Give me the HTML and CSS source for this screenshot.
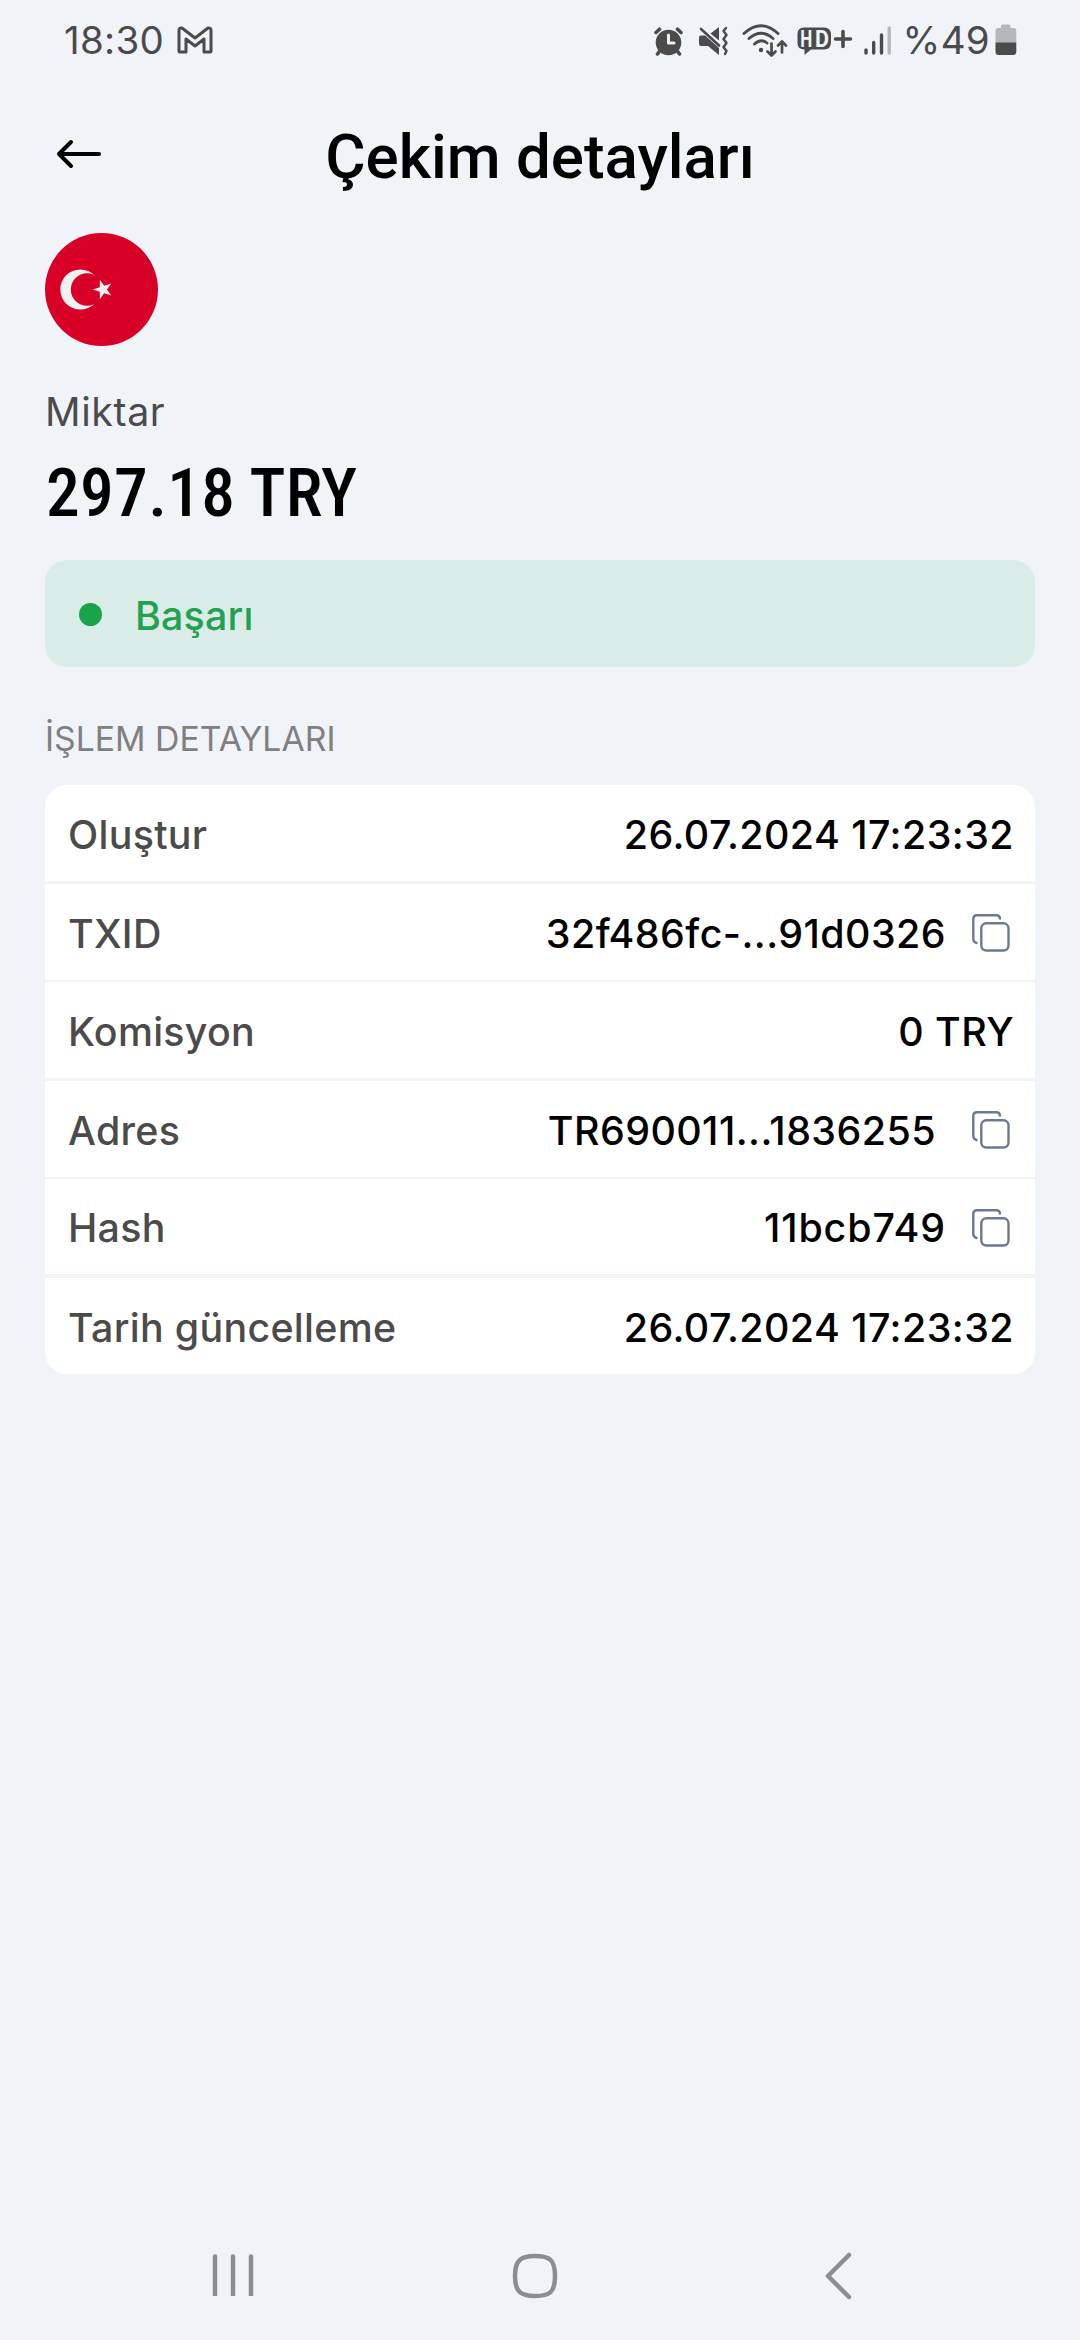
FILE: index.html
```html
<!DOCTYPE html>
<html lang="tr">

<head>
	<meta charset="UTF-8">
	<meta name="viewport" content="width=device-width, initial-scale=1.0">
	<title>Çekim detayları</title>
	<link rel="stylesheet" href="styles.css">
</head>

<body>
	<!-- durum çubuğu -->
	<div class="status-bar">
		<span class="clock">18:30</span>
		<svg class="icon-mail" width="36" height="28" viewBox="0 0 36 28">
			<path d="M2 25V4.500Q2 1.500 5 2L18 12 31 2Q34 1.500 34 4.500V25Q34 26 33 26H27V13L18 20 9 13V26H3Q2 26 2 25Z" />
		</svg>
		<div class="status-icons">
			<svg class="icon-alarm" width="30" height="30" viewBox="0 0 30 30">
				<circle cx="14.500" cy="15.500" r="12.800" fill="#4b4b4b" />
				<path d="M2 5.500L5.500 2.200M27 5.500L23.500 2.200M5 25L3.500 27M24 25L25.500 27" stroke="#4b4b4b" stroke-width="3.600" />
				<path d="M14.500 8V16H20" stroke="#f0f4f9" stroke-width="3" />
			</svg>
			<svg class="icon-mute" width="31" height="31" viewBox="0 0 31 31">
				<path d="M3 9.500H7L21 22V29L10 20H3Q1 20 1 18V11.500Q1 9.500 3 9.500ZM12.500 7.500L21 1V14.500Z" fill="#4b4b4b" />
				<path d="M3 3L21 19.500" stroke="#4b4b4b" stroke-width="2.600" />
				<path d="M28 2L25.500 5 28.500 9 25.500 13 28.500 17 25.500 21 28.500 25 27 28" stroke="#4b4b4b" stroke-width="2.500" />
			</svg>
			<svg class="icon-wifi" width="46" height="35" viewBox="0 0 46 35">
				<path d="M2 9.500Q19 -6 36 9.500M7 14.500Q19 4 31 14.500M12.500 20Q19 14 25 19" stroke="#4b4b4b" stroke-width="2.900" />
				<circle cx="19" cy="26" r="2.200" fill="#4b4b4b" />
				<path d="M29.500 19.500V31M25.500 27.500L29.500 31.500 33.500 27.500M40 28.500V18M36 21.500L40 17.500 44 21.500" stroke="#4b4b4b" stroke-width="2.700" />
			</svg>
			<svg class="icon-hd" width="56" height="39" viewBox="0 -8 56 39">
				<path d="M7 .5H27Q34 .5 34 8V15Q34 22.500 27 22.500H14L7.500 28V22.500Q.5 22.500 .5 16V7Q.5 .5 7 .5Z" fill="#4b4b4b" />
				<text class="hd-text" x="3.300" y="20" textLength="12" lengthAdjust="spacingAndGlyphs">H</text>
				<text class="hd-text" x="18" y="20" textLength="14" lengthAdjust="spacingAndGlyphs">D</text>
				<path d="M46 4.500V19.500M38.500 12H53.500" stroke="#4b4b4b" stroke-width="3.600" />
			</svg>
			<svg class="icon-signal" width="28" height="30" viewBox="0 0 28 30">
				<path d="M2 24V27M9.700 16.500V27M17.500 9V27" stroke="#4b4b4b" stroke-width="3.400" />
				<path d="M25.200 2V27" stroke="#b4b7bb" stroke-width="3.400" />
			</svg>
			<span class="percent">%49</span>
			<svg class="icon-battery" width="22" height="31" viewBox="0 0 22 31">
				<path d="M6 4V2Q6 .5 7.500 .5H14Q15.500 .5 15.500 2V4H18Q21.300 4 21.300 7V19H.5V7Q.5 4 3.500 4Z" fill="#b4b7bb" />
				<path d="M.5 18.500H21.300V27.500Q21.300 31 18 31H3.500Q.5 31 .5 27.500Z" fill="#4b4b4b" />
			</svg>
		</div>
	</div>

	<div class="header">
		<svg class="icon-back" width="46" height="30" viewBox="0 0 46 30">
			<path d="M16 3L4 15 16 27M4 15H44" />
		</svg>
		<h1 class="title">Çekim detayları</h1>
	</div>

	<div class="content">
		<svg class="flag" width="113" height="113" viewBox="0 0 113 113">
			<circle cx="56.500" cy="56.500" r="56.500" fill="#d80027" />
			<circle cx="35.300" cy="56.500" r="20" fill="#f0f0f0" />
			<circle cx="42" cy="56.500" r="16.200" fill="#d80027" />
			<path d="M47.700 56.500L54.800 54.200V46.700L59.200 52.700 66.300 50.400 61.900 56.500 66.300 62.600 59.200 60.300 54.800 66.300V58.800Z" fill="#f0f0f0" />
		</svg>
		<div class="label">Miktar</div>
		<div class="amount">297.18 TRY</div>

		<div class="state">
			<span class="dot"></span>
			<span>Başarı</span>
		</div>

		<h2 class="section">İŞLEM DETAYLARI</h2>
		<!-- işlem listesi -->
		<ul class="list">
			<li>
				<span class="name">Oluştur</span>
				<span class="value">26.07.2024 17:23:32</span>
			</li>
			<li>
				<span class="name">TXID</span>
				<span class="value">32f486fc-...91d0326</span>
				<svg class="copy" width="38" height="38" viewBox="0 0 38 38">
					<path d="M28 4.500Q27.500 1.300 24.500 1.300H5Q1.300 1.300 1.300 5V25Q1.300 28 4.500 29" />
					<rect x="9.300" y="9.300" width="27.200" height="27.200" rx="5" />
				</svg>
			</li>
			<li>
				<span class="name">Komisyon</span>
				<span class="value">0 TRY</span>
			</li>
			<li>
				<span class="name">Adres</span>
				<span class="value iban">TR690011...1836255</span>
				<svg class="copy" width="38" height="38" viewBox="0 0 38 38">
					<path d="M28 4.500Q27.500 1.300 24.500 1.300H5Q1.300 1.300 1.300 5V25Q1.300 28 4.500 29" />
					<rect x="9.300" y="9.300" width="27.200" height="27.200" rx="5" />
				</svg>
			</li>
			<li>
				<span class="name">Hash</span>
				<span class="value hash">11bcb749</span>
				<svg class="copy" width="38" height="38" viewBox="0 0 38 38">
					<path d="M28 4.500Q27.500 1.300 24.500 1.300H5Q1.300 1.300 1.300 5V25Q1.300 28 4.500 29" />
					<rect x="9.300" y="9.300" width="27.200" height="27.200" rx="5" />
				</svg>
			</li>
			<li>
				<span class="name">Tarih güncelleme</span>
				<span class="value">26.07.2024 17:23:32</span>
			</li>
		</ul>
	</div>

	<!-- alt gezinme -->
	<div class="nav-bar">
		<svg class="nav-recent" width="42" height="44" viewBox="0 0 42 44">
			<path d="M3 4.500V43M21 4.500V43M39 4.500V43" />
		</svg>
		<svg class="nav-home" width="46" height="46" viewBox="0 0 46 46">
			<path d="M23 3C38 3 43 7 43 23S38 43 23 43 3 38 3 23 8 3 23 3Z" />
		</svg>
		<svg class="nav-back" width="28" height="48" viewBox="0 0 28 48">
			<path d="M25 3L4 24 25 45" />
		</svg>
	</div>
</body>

</html>
```
FILE: styles.css
```css
* {
	box-sizing: border-box;
}

body {
	display: flex;
	flex-direction: column;
	width: 1080px;
	height: 2340px;
	margin: 0;
	background: #f0f4f9;
	color: #000;
	font-family: Inter, sans-serif;
	font-size: 39.375px;
	line-height: 48px;
}

svg {
	display: block;
	flex: none;
	fill: none;
	stroke-linecap: round;
	stroke-linejoin: round;
}

h1,
h2,
ul {
	margin: 0;
	padding: 0;
}

/* durum çubuğu */
.status-bar {
	display: flex;
	align-items: flex-start;
	height: 80px;
	padding: 16px 63px 0 64px;
	color: #4b4b4b;
	font-size: 38.5px;
}

.clock,
.percent {
	letter-spacing: .3px;
}

.icon-mail {
	margin: 10px 0 0 12.5px;
	stroke: #4b4b4b;
	stroke-width: 3;
}

.status-icons {
	display: flex;
	margin-left: auto;
}

.icon-alarm {
	margin-top: 11px;
}

.icon-mute {
	margin: 10px 0 0 14px;
}

.icon-wifi {
	margin: 8px 0 0 13px;
}

.icon-hd {
	margin: 3px 0 0 9px;
}

.icon-signal {
	margin: 10px 0 0 11px;
}

.hd-text {
	fill: #f0f4f9;
	font-family: Roboto, sans-serif;
	font-size: 23px;
	font-weight: 700;
}

.percent {
	margin-left: 11px;
}

.icon-battery {
	margin: 8px 0 0 5px;
}

/* başlık */
.header {
	display: grid;
	grid-template-columns: 46px 1fr 46px;
	align-items: center;
	height: 153px;
	padding: 0 55px;
}

.icon-back {
	margin-bottom: 5px;
	stroke: #000;
	stroke-width: 4;
}

.title {
	font-family: Roboto, sans-serif;
	font-size: 61.875px;
	font-weight: 500;
	line-height: 72px;
	text-align: center;
}

/* içerik */
.content {
	flex: 1;
	padding: 0 45px;
}

.label {
	margin-top: 42px;
	color: #4b4b4b;
	letter-spacing: .6px;
}

.amount {
	margin-top: 17px;
	padding-left: 1px;
	font-family: "Roboto Condensed", Roboto, sans-serif;
	font-size: 67.5px;
	font-stretch: 75%;
	font-weight: 500;
	letter-spacing: .3px;
	line-height: 80px;
}

.state {
	display: flex;
	align-items: center;
	gap: 33px;
	height: 107px;
	margin-top: 27px;
	padding: 5px 34px 0;
	border-radius: 22px;
	background: #daece8;
	color: #22a150;
	font-weight: 500;
	letter-spacing: .2px;
}

.dot {
	width: 23px;
	height: 23px;
	margin-top: -4px;
	border-radius: 50%;
	background: #1aa34a;
}

.section {
	margin-top: 51px;
	color: #808080;
	font-size: 33.75px;
	font-weight: 400;
	line-height: 42px;
}

.list {
	display: grid;
	grid-template-rows: 99px 98px 99px 98px 99px 96px;
	margin-top: 25px;
	overflow: hidden;
	border-radius: 22px;
	background: #fff;
	list-style: none;
}

.list li {
	display: flex;
	align-items: center;
	padding: 3px 21px 0 23px;
	border-bottom: 3px solid #f0f4f9;
	font-weight: 500;
}

.list li:nth-child(even) {
	border-bottom-width: 2px;
}

.list li:nth-child(5) {
	border-bottom-width: 4px;
}

.list li:last-child {
	border-bottom: 0;
}

.name {
	color: #4b4b4b;
	letter-spacing: .3px;
}

.value {
	margin-left: auto;
	letter-spacing: .45px;
}

.hash {
	letter-spacing: .9px;
}

.copy {
	margin: 0 4px 1px 26px;
	stroke: #6b7a90;
	stroke-width: 2.400;
}

.iban {
	margin-right: 10px;
}

/* alt gezinme */
.nav-bar {
	display: flex;
	height: 128px;
	padding: 40px 0 0 212px;
	stroke: #8c8d90;
	stroke-width: 4.500;
}

.nav-home {
	margin: 1px 266px 0 258px;
}
```
